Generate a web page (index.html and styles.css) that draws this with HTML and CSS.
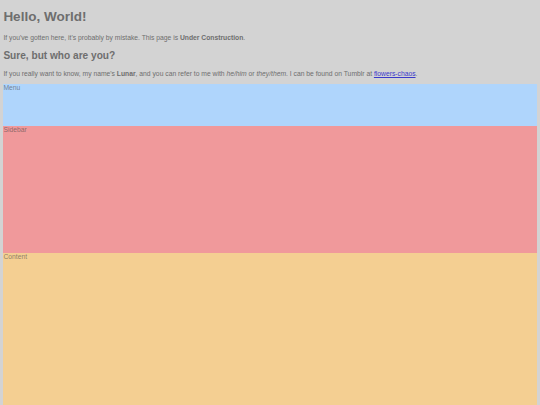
FILE: index.html
```html
<!DOCTYPE html>
<html lang="en">
<head>
  <meta charset="UTF-8">
  <title>Hello, World!</title>
  <link rel="stylesheet" href="styles.css">
</head>
<body>

<h1>Hello, World!</h1>
<p>If you've gotten here, it's probably by mistake. This page is <b>Under Construction</b>.</p>

<h2>Sure, but who are you?</h2>
<p>If you really want to know, my name's <b>Lunar</b>, and you can refer to me with <i>he/him</i> or <i>they/them</i>. I can be found on Tumblr at <a href="#">flowers-chaos</a>.</p>

<div class="layout">
  <div class="menu">Menu</div>
  <div class="sidebar">Sidebar</div>
  <div class="content">Content</div>
</div>

</body>
</html>
```

FILE: styles.css
```css
html {
  background: #d3d3d3;
}

body {
  font-family: "Liberation Sans", Arial, sans-serif;
  font-size: 6.75px;
  color: #6e6e6e;
  margin: 3.375px;
}

h1 {
  font-size: 13.5px;
  margin: 6px 0 10px;
}

h2 {
  font-size: 10.125px;
  margin: 8.4px 0 9.4px;
}

p {
  margin: 6.75px 0;
}

a {
  color: #3a3acb;
}

.layout {
  display: flex;
  flex-direction: column;
}

.layout > div {
  color: rgba(70, 70, 70, 0.6);
}

.menu {
  background: #afd5fc;
  height: 42px;
}

.sidebar {
  background: #f0999b;
  height: 127px;
}

.content {
  background: #f4cf92;
  height: 211px;
}
```
